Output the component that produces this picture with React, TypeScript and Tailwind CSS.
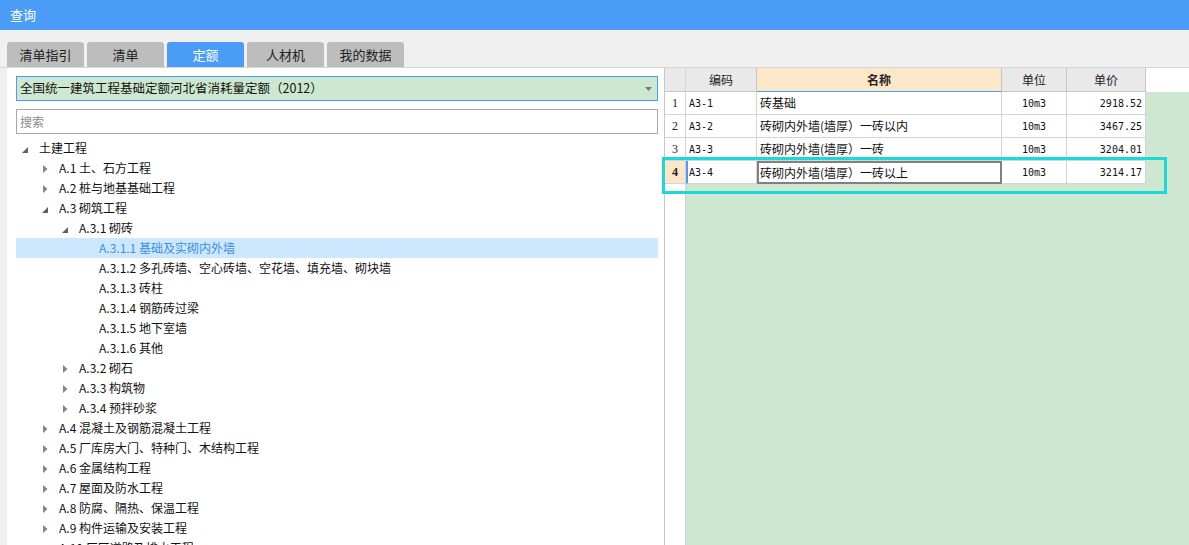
import React from "react";

const cjk = { fontFamily: '"Noto Sans CJK SC", "Noto Sans", sans-serif' };
const mono = { fontFamily: '"DejaVu Sans Mono", "Noto Sans CJK SC", monospace' };

type Node = { label: string; level: number; state: "open" | "closed" | "leaf"; selected?: boolean };

const tree: Node[] = [
  { label: "土建工程", level: 0, state: "open" },
  { label: "A.1 土、石方工程", level: 1, state: "closed" },
  { label: "A.2 桩与地基基础工程", level: 1, state: "closed" },
  { label: "A.3 砌筑工程", level: 1, state: "open" },
  { label: "A.3.1 砌砖", level: 2, state: "open" },
  { label: "A.3.1.1 基础及实砌内外墙", level: 3, state: "leaf", selected: true },
  { label: "A.3.1.2 多孔砖墙、空心砖墙、空花墙、填充墙、砌块墙", level: 3, state: "leaf" },
  { label: "A.3.1.3 砖柱", level: 3, state: "leaf" },
  { label: "A.3.1.4 钢筋砖过梁", level: 3, state: "leaf" },
  { label: "A.3.1.5 地下室墙", level: 3, state: "leaf" },
  { label: "A.3.1.6 其他", level: 3, state: "leaf" },
  { label: "A.3.2 砌石", level: 2, state: "closed" },
  { label: "A.3.3 构筑物", level: 2, state: "closed" },
  { label: "A.3.4 预拌砂浆", level: 2, state: "closed" },
  { label: "A.4 混凝土及钢筋混凝土工程", level: 1, state: "closed" },
  { label: "A.5 厂库房大门、特种门、木结构工程", level: 1, state: "closed" },
  { label: "A.6 金属结构工程", level: 1, state: "closed" },
  { label: "A.7 屋面及防水工程", level: 1, state: "closed" },
  { label: "A.8 防腐、隔热、保温工程", level: 1, state: "closed" },
  { label: "A.9 构件运输及安装工程", level: 1, state: "closed" },
  { label: "A.10 厂区道路及排水工程", level: 1, state: "closed" },
];

const rows = [
  { n: "1", code: "A3-1", name: "砖基础", unit: "10m3", price: "2918.52" },
  { n: "2", code: "A3-2", name: "砖砌内外墙(墙厚）一砖以内", unit: "10m3", price: "3467.25" },
  { n: "3", code: "A3-3", name: "砖砌内外墙(墙厚）一砖", unit: "10m3", price: "3204.01" },
  { n: "4", code: "A3-4", name: "砖砌内外墙(墙厚）一砖以上", unit: "10m3", price: "3214.17" },
];

const tabs = ["清单指引", "清单", "定额", "人材机", "我的数据"];

function Arrow({ state }: { state: Node["state"] }) {
  if (state === "open")
    return (
      <svg width="6" height="6" viewBox="0 0 6 6" className="mt-[3px]">
        <polygon points="6,0 6,6 0,6" fill="#606060" />
      </svg>
    );
  if (state === "closed")
    return (
      <svg width="5" height="8" viewBox="0 0 5 8" className="mt-[1px]">
        <polygon points="0,0 4.5,4 0,8" fill="#858585" />
      </svg>
    );
  return null;
}

export default function App() {
  return (
    <div className="w-[1189px] h-[545px] overflow-hidden bg-[#f0f0f0] flex flex-col" style={cjk}>
      <div className="h-[30px] bg-[#4a9cf7] flex items-center pl-[10px] text-white text-[13px] shrink-0">查询</div>
      <div className="h-[12px] shrink-0" />
      <div className="h-[25px] flex gap-[3px] pl-[7px] shrink-0">
        {tabs.map((t, i) => (
          <div
            key={t}
            className={
              i === 2
                ? "w-[77px] h-[25px] rounded-t-[3px] bg-[#4a9cf7] text-white text-[13px] flex items-center justify-center"
                : "w-[77px] h-[25px] rounded-t-[3px] bg-[#bdbdbd] text-[#222] text-[13px] flex items-center justify-center"
            }
          >
            {t}
          </div>
        ))}
      </div>
      <div className="flex-1 flex min-h-0 border-t border-[#d6d6d6]">
        {/* left panel */}
        <div className="w-[658px] ml-[7px] bg-white border-r border-[#c8c8c8] flex flex-col pl-[9px] pr-[6px] pt-[8px] min-h-0 overflow-hidden">
          <div className="h-[25px] bg-[#cde8d1] border border-[#4a9cf7] flex items-center justify-between pl-[3px] pr-[5px] text-[12.5px] text-[#111] shrink-0">
            <span>全国统一建筑工程基础定额河北省消耗量定额（2012）</span>
            <svg width="7" height="4" viewBox="0 0 7 4">
              <polygon points="0,0 7,0 3.5,4" fill="#7a7a7a" />
            </svg>
          </div>
          <div className="h-[25px] mt-[8px] border border-[#a9a9a9] flex items-center pl-[3px] text-[12px] text-[#8a8a8a] shrink-0">搜索</div>
          <div className="mt-[4px] flex flex-col">
            {tree.map((n) => (
              <div
                key={n.label}
                className={
                  n.selected
                    ? "h-[20px] flex items-center bg-[#cce8ff] text-[#3d8ee4] text-[12px] shrink-0"
                    : "h-[20px] flex items-center text-[#111] text-[12px] shrink-0"
                }
                style={{ paddingLeft: n.level * 20 }}
              >
                <div className="w-[18px] h-[20px] flex items-center justify-center">
                  <Arrow state={n.state} />
                </div>
                <span className="ml-[5px] whitespace-nowrap">{n.label}</span>
              </div>
            ))}
          </div>
        </div>
        {/* right panel */}
        <div className="flex-1 flex relative min-h-0">
          {/* row numbers column */}
          <div className="w-[21px] bg-white border-r border-[#d4d4d4] flex flex-col shrink-0">
            <div className="h-[24px] bg-[#e9e9e9] border-b border-[#c6c6c6] shrink-0" />
            {rows.map((r) => (
              <div
                key={r.n}
                className={
                  r.n === "4"
                    ? "h-[23px] bg-[#fde5c8] border-b border-[#d4d4d4] flex items-center justify-center text-[12px] font-bold text-[#222] shrink-0"
                    : "h-[23px] border-b border-[#d4d4d4] flex items-center justify-center text-[12px] text-[#222] shrink-0"
                }
                style={{ fontFamily: '"Liberation Serif", serif' }}
              >
                {r.n}
              </div>
            ))}
          </div>
          <div className="flex-1 flex flex-col min-h-0">
            <div className="h-[24px] bg-white flex shrink-0">
              <div className="w-[71px] bg-[#e9e9e9] border-r border-b border-[#c6c6c6] flex items-center justify-center text-[12px] text-[#222]">编码</div>
              <div className="w-[245px] bg-[#fde7c9] border-r border-[#c6c6c6] border-b border-b-[#4a9cf7] flex items-center justify-center text-[12px] font-bold text-[#222]">名称</div>
              <div className="w-[65px] bg-[#e9e9e9] border-r border-b border-[#c6c6c6] flex items-center justify-center text-[12px] text-[#222]">单位</div>
              <div className="w-[79px] bg-[#e9e9e9] border-r border-b border-[#c6c6c6] flex items-center justify-center text-[12px] text-[#222]">单价</div>
            </div>
            <div className="flex-1 bg-[#cde7d1] flex flex-col">
              {rows.map((r) => {
                const sel = r.n === "4";
                return (
                  <div key={r.n} className="h-[23px] flex w-[460px] bg-white shrink-0">
                    <div
                      className={
                        sel
                          ? "w-[71px] border-r border-b border-[#d4d4d4] border-l-2 border-l-[#4a9cf7] flex items-center pl-[1px] text-[10px] text-[#111]"
                          : "w-[71px] border-r border-b border-[#d4d4d4] flex items-center pl-[3px] text-[10px] text-[#111]"
                      }
                      style={mono}
                    >
                      {r.code}
                    </div>
                    <div
                      className={
                        sel
                          ? "w-[245px] border-2 border-[#808080] flex items-center pl-[1px] text-[12px] text-[#111]"
                          : "w-[245px] border-r border-b border-[#d4d4d4] flex items-center pl-[3px] text-[12px] text-[#111]"
                      }
                    >
                      {r.name}
                    </div>
                    <div className="w-[65px] border-r border-b border-[#d4d4d4] flex items-center justify-center text-[10px] text-[#111]" style={mono}>
                      {r.unit}
                    </div>
                    <div className="w-[79px] border-r border-b border-[#d4d4d4] flex items-center justify-end pr-[3px] text-[10px] text-[#111]" style={mono}>
                      {r.price}
                    </div>
                  </div>
                );
              })}
            </div>
          </div>
          <div className="absolute left-[-3px] top-[89px] w-[505px] h-[37px] border-[3px] border-[#1bd9d6] pointer-events-none" />
        </div>
      </div>
    </div>
  );
}
